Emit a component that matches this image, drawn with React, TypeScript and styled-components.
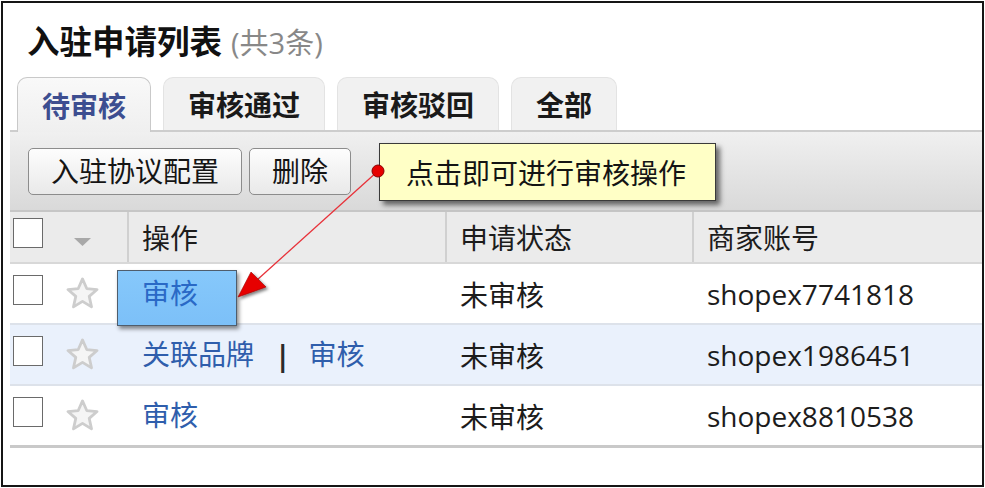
import React from "react";
import styled, { createGlobalStyle } from "styled-components";

const GlobalStyle = createGlobalStyle`
  html, body {
    margin: 0;
    padding: 0;
    background: #fff;
  }
  body {
    font-family: "Open Sans", "Noto Sans CJK SC", sans-serif;
    color: #111;
  }
`;

const tabs = ["待审核", "审核通过", "审核驳回", "全部"];

type Row = {
  ops: string[];
  status: string;
  account: string;
  highlight?: boolean;
};

const rows: Row[] = [
  { ops: ["审核"], status: "未审核", account: "shopex7741818", highlight: true },
  { ops: ["关联品牌", "审核"], status: "未审核", account: "shopex1986451" },
  { ops: ["审核"], status: "未审核", account: "shopex8810538" }
];

const StarIcon = () => (
  <svg width="35" height="35" viewBox="0 0 24 24">
    <polygon
      points="12,2 14.9,8.6 22,9.3 16.6,14 18.2,21.2 12,17.4 5.8,21.2 7.4,14 2,9.3 9.1,8.6"
      fill="#f5f5f5"
      stroke="#cdcdcd"
      strokeWidth="1.9"
      strokeLinejoin="round"
    />
  </svg>
);

const SortArrow = () => (
  <svg width="17" height="8" viewBox="0 0 17 8">
    <polygon points="0,0 17,0 8.5,8" fill="#a8a8a8" />
  </svg>
);

const Annotation = () => (
  <ArrowLayer width="985" height="488" viewBox="0 0 985 488">
    <defs>
      <filter id="shadow" x="-50%" y="-50%" width="200%" height="200%">
        <feDropShadow dx="2" dy="2" stdDeviation="1.6" floodColor="#000" floodOpacity="0.5" />
      </filter>
    </defs>
    <line x1="378" y1="171" x2="257" y2="280" stroke="#e8323a" strokeWidth="1.3" />
    <polygon
      points="238,297 251,272 266,287"
      fill="#e60000"
      stroke="#a00000"
      strokeWidth="0.6"
      filter="url(#shadow)"
    />
    <circle cx="378" cy="171" r="6" fill="#e60000" stroke="#8a0000" strokeWidth="1" />
  </ArrowLayer>
);

const App: React.FC = () => {
  return (
    <Page>
      <GlobalStyle />
      <Frame>
        <TitleBar>
          <Title>入驻申请列表</Title>
          <Count>(共3条)</Count>
        </TitleBar>
        <TabRow>
          {tabs.map((tab, i) => (
            <Tab key={tab} active={i === 0}>
              {tab}
            </Tab>
          ))}
        </TabRow>
        <Toolbar>
          <Button>入驻协议配置</Button>
          <Button>删除</Button>
        </Toolbar>
        <Table>
          <HeaderRow>
            <Cell>
              <Checkbox />
            </Cell>
            <Cell>
              <SortSlot>
                <SortArrow />
              </SortSlot>
            </Cell>
            <TextCell divided>操作</TextCell>
            <TextCell divided>申请状态</TextCell>
            <TextCell divided>商家账号</TextCell>
          </HeaderRow>
          {rows.map((row, i) => (
            <DataRow key={row.account} alt={i === 1} last={i === rows.length - 1}>
              <Cell>
                <Checkbox />
              </Cell>
              <Cell>
                <StarSlot>
                  <StarIcon />
                </StarSlot>
              </Cell>
              <TextCell>
                {row.ops.map((op, j) => (
                  <React.Fragment key={op}>
                    {j > 0 && <Separator>|</Separator>}
                    <OpLink highlight={row.highlight}>{op}</OpLink>
                  </React.Fragment>
                ))}
              </TextCell>
              <TextCell>{row.status}</TextCell>
              <TextCell>{row.account}</TextCell>
            </DataRow>
          ))}
        </Table>
      </Frame>
      <Callout>点击即可进行审核操作</Callout>
      <Annotation />
    </Page>
  );
};

const Page = styled.div`
  position: relative;
  box-sizing: border-box;
  width: 985px;
  height: 488px;
  padding: 1px 0 0 1px;
  overflow: hidden;
`;

const Frame = styled.div`
  box-sizing: border-box;
  width: 983px;
  height: 486px;
  border: 2px solid #151515;
  padding-left: 7px;
  display: flex;
  flex-direction: column;
`;

const TitleBar = styled.div`
  height: 74px;
  padding: 3px 0 0 17px;
  box-sizing: border-box;
  display: flex;
  align-items: center;
`;

const Title = styled.h1`
  margin: 0;
  font-size: 32.5px;
  font-weight: 700;
  color: #111;
  line-height: 1.2;
`;

const Count = styled.span`
  margin-left: 9px;
  font-size: 29px;
  color: #888;
  line-height: 1.2;
  padding-top: 3px;
`;

const TabRow = styled.div`
  height: 53px;
  padding-left: 7px;
  display: flex;
  align-items: flex-end;
  gap: 12px;
`;

const Tab = styled.div<{ active?: boolean }>`
  position: relative;
  z-index: ${({ active }) => (active ? 1 : 0)};
  box-sizing: border-box;
  height: ${({ active }) => (active ? "55px" : "53px")};
  margin-bottom: ${({ active }) => (active ? "-2px" : "0")};
  padding: 0 24px;
  display: flex;
  align-items: center;
  border: 1px solid ${({ active }) => (active ? "#c9c9c9" : "#e3e3e3")};
  border-bottom: none;
  border-radius: 10px 10px 0 0;
  background: ${({ active }) =>
    active ? "linear-gradient(#f9f9f9, #efefef)" : "#f1f1f1"};
  color: ${({ active }) => (active ? "#3d4e90" : "#1a1a1a")};
  font-size: 28px;
  font-weight: 700;
`;

const Toolbar = styled.div`
  box-sizing: border-box;
  height: 82px;
  padding-left: 18px;
  display: flex;
  align-items: center;
  gap: 7px;
  border-top: 2px solid #cdcdcd;
  border-bottom: 2px solid #c6c6c6;
  background: linear-gradient(#f0f0f0, #d9d9d9);
`;

const Button = styled.button`
  box-sizing: border-box;
  height: 47px;
  padding: 0 22px;
  border: 1.5px solid #8c8c8c;
  border-radius: 5px;
  background: linear-gradient(#fdfdfd, #e9e9e9);
  font-family: "Open Sans", "Noto Sans CJK SC", sans-serif;
  font-size: 28px;
  color: #151515;
  line-height: 1;
`;

const Table = styled.div`
  display: flex;
  flex-direction: column;
`;

const gridColumns = "45px 72px 318px 247px 1fr";

const HeaderRow = styled.div`
  display: grid;
  grid-template-columns: ${gridColumns};
  height: 52px;
  box-sizing: border-box;
  background: #ebebeb;
  border-bottom: 2px solid #d8d8d8;
`;

const DataRow = styled.div<{ alt?: boolean; last?: boolean }>`
  display: grid;
  grid-template-columns: ${gridColumns};
  box-sizing: border-box;
  height: ${({ last }) => (last ? "62px" : "61px")};
  background: ${({ alt }) => (alt ? "#eaf1fc" : "#fff")};
  border-bottom: ${({ last }) =>
    last ? "3px solid #c9c9c9" : "2px solid #dde2ea"};
`;

const Cell = styled.div`
  display: flex;
  align-items: center;
`;

const TextCell = styled.div<{ divided?: boolean }>`
  display: flex;
  align-items: center;
  box-sizing: border-box;
  padding-left: 13px;
  border-left: 2px solid ${({ divided }) => (divided ? "#d0d0d0" : "transparent")};
  font-size: 28px;
  color: #1c1c1c;
  white-space: nowrap;
`;

const Checkbox = styled.span`
  box-sizing: border-box;
  width: 30px;
  height: 30px;
  margin: 0 0 8px 3px;
  border: 1.5px solid #6a6a6a;
  background: #fff;
`;

const SortSlot = styled.span`
  display: flex;
  margin: 10px 0 0 19px;
`;

const StarSlot = styled.span`
  display: flex;
  margin-left: 10px;
`;

const OpLink = styled.a<{ highlight?: boolean }>`
  position: relative;
  z-index: 0;
  color: ${({ highlight }) => (highlight ? "#2a69c6" : "#2f5eac")};
  line-height: 1.2;
  cursor: pointer;

  &::before {
    content: "";
    display: ${({ highlight }) => (highlight ? "block" : "none")};
    position: absolute;
    z-index: -1;
    left: -25px;
    top: -7px;
    width: 120px;
    height: 56px;
    box-sizing: border-box;
    border: 1px solid #4f5d6c;
    background: linear-gradient(#86c8fb, #7cc0f8);
    box-shadow: 2px 3px 4px rgba(0, 0, 0, 0.45);
  }
`;

const Separator = styled.span`
  margin: 0 18px 0 21px;
  font-weight: 700;
  color: #2a2a2a;
`;

const Callout = styled.div`
  position: absolute;
  left: 379px;
  top: 143px;
  width: 337px;
  height: 58px;
  box-sizing: border-box;
  padding-left: 26px;
  display: flex;
  align-items: center;
  border: 1px solid #3a3a3a;
  background: #ffffc6;
  box-shadow: 4px 4px 5px rgba(0, 0, 0, 0.55);
  font-size: 28px;
  color: #141414;
`;

const ArrowLayer = styled.svg`
  position: absolute;
  left: 0;
  top: 0;
  pointer-events: none;
`;

export default App;
